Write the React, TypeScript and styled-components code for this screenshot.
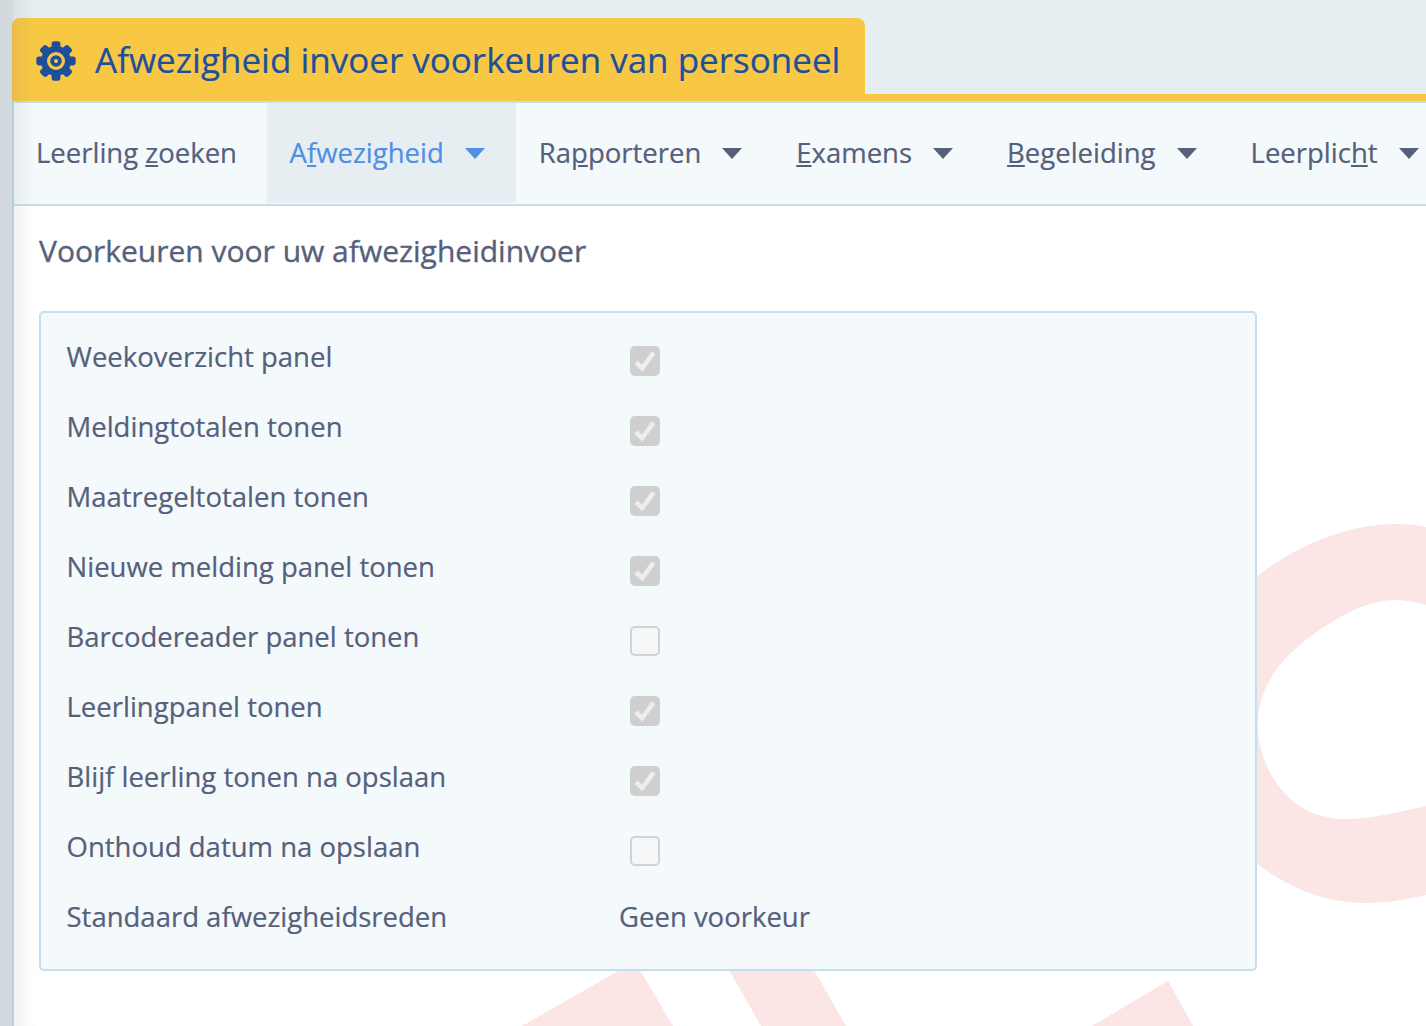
import React from "react";
import styled, { createGlobalStyle } from "styled-components";

const Global = createGlobalStyle`
  html, body { margin: 0; padding: 0; height: 100%; overflow: hidden; }
  body { background: #e7eef1; font-family: "Open Sans", "Liberation Sans", sans-serif; color: #55607a; }
`;

const Page = styled.div`
  position: relative;
  width: 1426px;
  height: 1026px;
  overflow: hidden;
  padding-top: 18px;
  box-sizing: border-box;
  background: #e7eef1;
`;

const EdgeShade = styled.div`
  position: absolute;
  left: 0;
  top: 0;
  bottom: 0;
  width: 36px;
  background: linear-gradient(
    to right,
    rgba(90, 100, 105, 0.15) 0,
    rgba(90, 100, 105, 0.15) 12px,
    rgba(90, 100, 105, 0.08) 15px,
    rgba(90, 100, 105, 0) 36px
  );
  pointer-events: none;
  z-index: 5;
`;

const Header = styled.header`
  margin-left: 12px;
  border-bottom: 7px solid #f8c845;
  height: 76px;
`;

const TitleTab = styled.div`
  display: inline-flex;
  align-items: center;
  gap: 19px;
  height: 83px;
  box-sizing: border-box;
  padding: 0 25px 0 24px;
  background: #f8c845;
  border-radius: 8px 8px 0 0;
`;

const GearIcon = styled.svg`
  display: block;
  flex: none;
  margin-top: 2px;
`;

const Title = styled.h1`
  margin: 0;
  font-size: 35px;
  line-height: 83px;
  font-weight: 400;
  color: #1d4f9c;
  white-space: nowrap;
  -webkit-text-stroke: 0.2px #1d4f9c;
`;

const Main = styled.main`
  position: relative;
  margin-left: 12px;
  height: 925px;
  background: #fff;
  border-left: 2px solid #c5dfee;
`;

const Watermark = styled.svg`
  position: absolute;
  left: -14px;
  top: -101px;
  width: 1426px;
  height: 1026px;
  pointer-events: none;
`;

const Nav = styled.nav`
  position: relative;
  display: flex;
  height: 105px;
  box-sizing: border-box;
  background: #f4f9fc;
  border-top: 2px solid #c5dfee;
  border-bottom: 2px solid #c5dfee;
  padding-bottom: 1px;
`;

const NavItem = styled.a<{ $active?: boolean; $first?: boolean }>`
  display: flex;
  align-items: center;
  flex: none;
  height: 100%;
  box-sizing: border-box;
  padding: 0 30px 0 ${(p) => (p.$first ? "22px" : "22.6px")};
  font-size: 27.5px;
  line-height: 1;
  white-space: nowrap;
  color: ${(p) => (p.$active ? "#4f8fe4" : "#55607a")};
  background: ${(p) => (p.$active ? "#e7eef1" : "transparent")};
  -webkit-text-stroke: 0.2px currentColor;
`;

const Caret = styled.i`
  display: block;
  flex: none;
  width: 0;
  height: 0;
  margin: 1px 1.4px 0 21px;
  border-left: 10.5px solid transparent;
  border-right: 10.5px solid transparent;
  border-top: 11px solid currentColor;
`;

const Section = styled.section`
  position: relative;
  padding: 0 0 0 25px;
`;

const Heading = styled.h2`
  margin: 0;
  padding-top: 23px;
  height: 105px;
  box-sizing: border-box;
  font-size: 30px;
  line-height: 44px;
  font-weight: 500;
  color: #55607a;
  -webkit-text-stroke: 0.35px #55607a;
`;

const Panel = styled.div`
  width: 1218px;
  height: 660px;
  box-sizing: border-box;
  background: #f4f9fc;
  border: 2px solid #c5dfee;
  border-radius: 5px;
  padding: 11px 0 0 25.5px;
`;

const Row = styled.div`
  display: flex;
  align-items: center;
  height: 70px;
`;

const Label = styled.span`
  width: 563.5px;
  flex: none;
  font-size: 27.5px;
  line-height: 70px;
  color: #55607a;
  position: relative;
  top: -2px;
  -webkit-text-stroke: 0.2px #55607a;
`;

const Check = styled.span<{ $on: boolean }>`
  display: flex;
  align-items: center;
  justify-content: center;
  width: 30px;
  height: 30px;
  margin-top: 4px;
  box-sizing: border-box;
  border-radius: 5px;
  background: ${(p) => (p.$on ? "#cfcfcf" : "#f5f6f8")};
  border: ${(p) => (p.$on ? "none" : "2px solid #d2d2d2")};
`;

const Value = styled.span`
  margin-left: -11px;
  font-size: 27.5px;
  line-height: 70px;
  color: #55607a;
  position: relative;
  top: -2px;
  -webkit-text-stroke: 0.2px #55607a;
`;

function Gear() {
  const teeth = [0, 45, 90, 135, 180, 225, 270, 315];
  return (
    <GearIcon width="40" height="40" viewBox="0 0 40 40" aria-hidden="true">
      <circle cx="20" cy="20" r="15" fill="#1d4f9c" />
      {teeth.map((a) => (
        <rect key={a} x="15.6" y="0.3" width="8.8" height="10" rx="2.8" fill="#1d4f9c" transform={`rotate(${a} 20 20)`} />
      ))}
      <circle cx="20" cy="20" r="7.4" fill="none" stroke="#f8c845" strokeWidth="3.2" />
      <circle cx="20" cy="20" r="2" fill="#f8c845" />
    </GearIcon>
  );
}

function Tick() {
  return (
    <svg width="30" height="30" viewBox="0 0 30 30" aria-hidden="true">
      <path d="M6 16.2 L12.2 22 L23.6 6.6" fill="none" stroke="#eeeeee" strokeWidth="4.6" />
    </svg>
  );
}

const navItems: { pre: string; key: string; post: string; caret: boolean; active?: boolean }[] = [
  { pre: "Leerling ", key: "z", post: "oeken", caret: false },
  { pre: "A", key: "f", post: "wezigheid", caret: true, active: true },
  { pre: "Ra", key: "p", post: "porteren", caret: true },
  { pre: "", key: "E", post: "xamens", caret: true },
  { pre: "", key: "B", post: "egeleiding", caret: true },
  { pre: "Leerplic", key: "h", post: "t", caret: true },
];

const rows: [string, boolean][] = [
  ["Weekoverzicht panel", true],
  ["Meldingtotalen tonen", true],
  ["Maatregeltotalen tonen", true],
  ["Nieuwe melding panel tonen", true],
  ["Barcodereader panel tonen", false],
  ["Leerlingpanel tonen", true],
  ["Blijf leerling tonen na opslaan", true],
  ["Onthoud datum na opslaan", false],
];

export default function App() {
  return (
    <Page>
      <Global />
      <Header>
        <TitleTab>
          <Gear />
          <Title>Afwezigheid invoer voorkeuren van personeel</Title>
        </TitleTab>
      </Header>
      <Main>
        <Watermark viewBox="0 0 1426 1026" aria-hidden="true">
          <g fill="#fbe6e5">
            <path d="M1240 590 C1290 545 1350 524 1395 524 C1408 524 1418 525 1426 527 L1426 605 C1415 602 1405 600 1395 600 C1365 600 1330 620 1300 645 C1272 668 1258 695 1258 725 C1258 770 1290 819 1345 819 C1370 819 1400 812 1426 806 L1426 895 C1405 900 1385 903 1365 903 C1320 903 1280 885 1240 850 Z" />
            <path d="M522 1026 L620 970 L640 970 L673 1026 Z" />
            <path d="M729 970 L814 970 L846 1026 L761 1026 Z" />
            <path d="M1092 1026 L1168 981 L1193 1026 Z" />
          </g>
        </Watermark>
        <Nav>
          {navItems.map((n, i) => (
            <NavItem key={n.pre + n.key} $active={n.active} $first={i === 0}>
              <span>
                {n.pre}
                <u>{n.key}</u>
                {n.post}
              </span>
              {n.caret && <Caret />}
            </NavItem>
          ))}
        </Nav>
        <Section>
          <Heading>Voorkeuren voor uw afwezigheidinvoer</Heading>
          <Panel>
            {rows.map(([label, on]) => (
              <Row key={label}>
                <Label>{label}</Label>
                <Check $on={on}>{on && <Tick />}</Check>
              </Row>
            ))}
            <Row>
              <Label>Standaard afwezigheidsreden</Label>
              <Value>Geen voorkeur</Value>
            </Row>
          </Panel>
        </Section>
      </Main>
      <EdgeShade />
    </Page>
  );
}
